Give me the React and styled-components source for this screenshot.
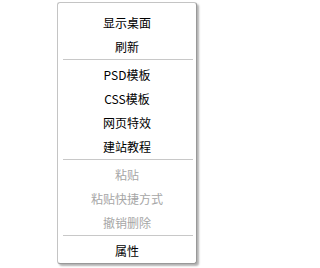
import styled, { createGlobalStyle } from "styled-components";

const GlobalStyle = createGlobalStyle`
  html, body {
    margin: 0;
    padding: 0;
    background: #fff;
  }
`;

const Page = styled.div`
  width: 268px;
  height: 268px;
  padding: 2px 0 0 57px;
  box-sizing: border-box;
  background: #fff;
`;

const Menu = styled.ul`
  list-style: none;
  margin: 0;
  width: 140px;
  box-sizing: border-box;
  padding: 8px 0 0;
  background: #fff;
  border: 1px solid #c4c4c4;
  border-right-color: #999;
  border-bottom-color: #999;
  border-radius: 3px;
  box-shadow: 2px 2px 2px rgba(0, 0, 0, 0.3);
  font-family: "Noto Sans CJK SC", "Liberation Sans", sans-serif;
  font-size: 12px;
`;

const Item = styled.li`
  height: 24px;
  line-height: 24px;
  text-align: center;
  color: ${({ disabled }) => (disabled ? "#a6a6a6" : "#000")};
  cursor: ${({ disabled }) => (disabled ? "default" : "pointer")};
`;

const Separator = styled.li`
  height: 1px;
  margin: 0 3px 3px 5px;
  background: #c8c8c8;
`;

const groups = [
  [{ label: "显示桌面" }, { label: "刷新" }],
  [
    { label: "PSD模板" },
    { label: "CSS模板" },
    { label: "网页特效" },
    { label: "建站教程" }
  ],
  [
    { label: "粘贴", disabled: true },
    { label: "粘贴快捷方式", disabled: true },
    { label: "撤销删除", disabled: true }
  ],
  [{ label: "属性" }]
];

const App = () => (
  <Page>
    <GlobalStyle />
    <Menu>
      {groups.map((group, i) => [
        i > 0 && <Separator key={`sep-${i}`} />,
        ...group.map((item) => (
          <Item key={item.label} disabled={item.disabled}>
            {item.label}
          </Item>
        ))
      ])}
    </Menu>
  </Page>
);

export default App;
